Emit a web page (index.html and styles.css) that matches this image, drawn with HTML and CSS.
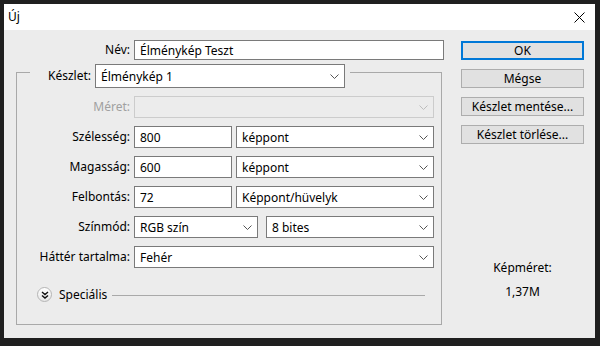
FILE: index.html
```html
<!DOCTYPE html>
<html lang="hu">
<head>
<meta charset="utf-8">
<title>Új</title>
<link rel="stylesheet" href="styles.css">
</head>
<body>
<div class="window">
  <div class="titlebar">
    <span class="title">Új</span>
    <svg class="close" width="11" height="11" viewBox="0 0 11 11"><path d="M0.5 0.5 L10.5 10.5 M10.5 0.5 L0.5 10.5" stroke="#000" stroke-width="1" fill="none"/></svg>
  </div>
  <div class="body">
    <div class="main">
      <div class="name-row">
        <span class="label name-label">Név:</span>
        <div class="input name-input">Élménykép Teszt</div>
      </div>
      <div class="group">
        <div class="group-head">
          <span class="label">Készlet:</span>
          <div class="select preset"><span class="val">Élménykép 1</span><svg class="chev" width="9" height="5" viewBox="0 0 9 5"><path d="M0.5 0.5 L4.5 4.5 L8.5 0.5" stroke="#555" fill="none"/></svg></div>
        </div>
        <div class="row">
          <span class="label row-label disabled-label">Méret:</span>
          <div class="select full disabled"><span class="val"></span><svg class="chev" width="9" height="5" viewBox="0 0 9 5"><path d="M0.5 0.5 L4.5 4.5 L8.5 0.5" stroke="#bdbdbd" fill="none"/></svg></div>
        </div>
        <div class="row">
          <span class="label row-label">Szélesség:</span>
          <div class="input small">800</div>
          <div class="select unit"><span class="val">képpont</span><svg class="chev" width="9" height="5" viewBox="0 0 9 5"><path d="M0.5 0.5 L4.5 4.5 L8.5 0.5" stroke="#555" fill="none"/></svg></div>
        </div>
        <div class="row">
          <span class="label row-label">Magasság:</span>
          <div class="input small">600</div>
          <div class="select unit"><span class="val">képpont</span><svg class="chev" width="9" height="5" viewBox="0 0 9 5"><path d="M0.5 0.5 L4.5 4.5 L8.5 0.5" stroke="#555" fill="none"/></svg></div>
        </div>
        <div class="row">
          <span class="label row-label">Felbontás:</span>
          <div class="input small">72</div>
          <div class="select unit"><span class="val">Képpont/hüvelyk</span><svg class="chev" width="9" height="5" viewBox="0 0 9 5"><path d="M0.5 0.5 L4.5 4.5 L8.5 0.5" stroke="#555" fill="none"/></svg></div>
        </div>
        <div class="row">
          <span class="label row-label">Színmód:</span>
          <div class="select mode"><span class="val">RGB szín</span><svg class="chev" width="9" height="5" viewBox="0 0 9 5"><path d="M0.5 0.5 L4.5 4.5 L8.5 0.5" stroke="#555" fill="none"/></svg></div>
          <div class="select bits"><span class="val">8 bites</span><svg class="chev" width="9" height="5" viewBox="0 0 9 5"><path d="M0.5 0.5 L4.5 4.5 L8.5 0.5" stroke="#555" fill="none"/></svg></div>
        </div>
        <div class="row">
          <span class="label row-label">Háttér tartalma:</span>
          <div class="select full"><span class="val">Fehér</span><svg class="chev" width="9" height="5" viewBox="0 0 9 5"><path d="M0.5 0.5 L4.5 4.5 L8.5 0.5" stroke="#555" fill="none"/></svg></div>
        </div>
        <div class="special">
          <span class="toggle"><svg width="8" height="8" viewBox="0 0 8 8"><path d="M1 1 L4 3.5 L7 1 M1 4.5 L4 7 L7 4.5" stroke="#111" stroke-width="1.4" fill="none"/></svg></span>
          <span class="special-text">Speciális</span>
          <span class="rule"></span>
        </div>
      </div>
    </div>
    <div class="side">
      <div class="btn default">OK</div>
      <div class="btn">Mégse</div>
      <div class="btn">Készlet mentése...</div>
      <div class="btn">Készlet törlése...</div>
      <div class="info">
        <div class="info-label">Képméret:</div>
        <div class="info-value">1,37M</div>
      </div>
    </div>
  </div>
</div>
</body>
</html>
```

FILE: styles.css
```css
* { box-sizing: border-box; }
html, body { margin: 0; padding: 0; }
body {
  background: #1f1f1f;
  width: 600px;
  height: 346px;
  overflow: hidden;
  font-family: "Noto Sans", "Liberation Sans", sans-serif;
  font-size: 12px;
  color: #000;
}
.window {
  margin: 4px 0 0 4px;
  width: 591px;
  height: 334px;
  background: #ececec;
  display: flex;
  flex-direction: column;
}
.titlebar {
  height: 26px;
  background: #fff;
  display: flex;
  align-items: center;
  padding-left: 4px;
  padding-right: 10px;
}
.title { font-size: 12px; flex: 1; line-height: 26px; }
.close { display: block; }
.body {
  flex: 1;
  display: flex;
  align-items: flex-start;
}
.main {
  margin-left: 12px;
  width: 428px;
  padding-top: 10px;
}
.label { white-space: nowrap; line-height: 16px; }
.name-row {
  display: flex;
  align-items: center;
  gap: 4px;
}
.name-label { width: 114px; text-align: right; }
.input, .select {
  background: #fff;
  border: 1px solid #7a7a7a;
  display: flex;
  align-items: center;
  padding-left: 5px;
  white-space: nowrap;
}
.name-input { width: 310px; height: 20px; }
.group {
  margin-top: 12px;
  width: 426px;
  border: 1px solid #a9a9a9;
  padding-bottom: 22px;
}
.group-head {
  margin-top: -9px;
  margin-left: 13px;
  width: max-content;
  background: #ececec;
  display: flex;
  align-items: center;
  gap: 4px;
  padding-left: 18px;
  padding-right: 5px;
}
.select .val { flex: 1; }
.select .chev { margin-right: 5px; display: block; }
.preset { width: 250px; height: 24px; }
.row {
  display: flex;
  align-items: center;
  gap: 4px;
  margin-top: 8px;
  height: 22px;
}
.row-label { width: 113px; text-align: right; }
.disabled-label { color: #a0a0a0; }
.full { width: 300px; height: 22px; }
.disabled { background: #ececec; border-color: #cccccc; }
.small { width: 98px; height: 22px; }
.unit { width: 198px; height: 22px; }
.mode { width: 124px; height: 22px; margin-right: 4px; }
.bits { width: 168px; height: 22px; }
.special {
  margin-top: 19px;
  display: flex;
  align-items: center;
  height: 15px;
  padding-left: 20px;
  padding-right: 16px;
}
.toggle {
  width: 15px;
  height: 15px;
  border-radius: 50%;
  border: 1px solid #b5b5b5;
  background: linear-gradient(#ffffff, #e6e6e6);
  display: flex;
  align-items: center;
  justify-content: center;
}
.toggle svg { display: block; }
.special-text { margin-left: 7px; line-height: 16px; }
.rule {
  flex: 1;
  height: 1px;
  background: #a9a9a9;
  margin-left: 5px;
  margin-top: 1px;
}
.side {
  margin-left: 17px;
  width: 123px;
  padding-top: 11px;
  display: flex;
  flex-direction: column;
  gap: 9px;
}
.btn {
  height: 19px;
  background: #e1e1e1;
  border: 1px solid #adadad;
  display: flex;
  align-items: center;
  justify-content: center;
  white-space: nowrap;
}
.btn.default { border: 2px solid #0078d7; }
.info {
  margin-top: 107px;
  text-align: center;
  line-height: 16px;
}
.info-value { margin-top: 8px; }
```
